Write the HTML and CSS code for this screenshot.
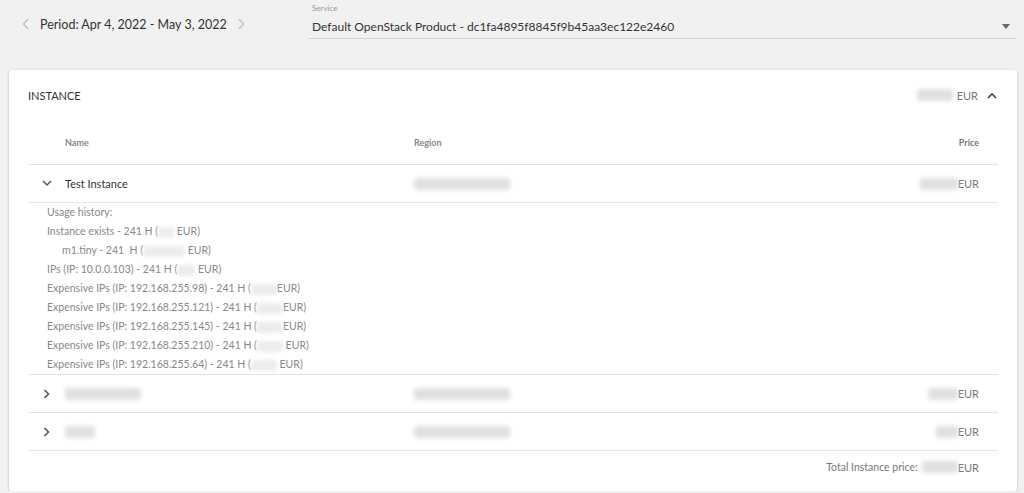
FILE: index.html
```html
<!DOCTYPE html>
<html lang="en">
<head>
    <meta charset="UTF-8">
    <title>Billing - Instance</title>
    <link rel="stylesheet" href="styles.css">
</head>
<body>
    <div class="toolbar">
        <div class="period">
            <svg class="nav-arrow" width="8" height="12" viewBox="0 0 8 12"><path d="M6 1 L1.5 6 L6 11" fill="none" stroke="#c4c4c4" stroke-width="1.4"/></svg>
            <span class="period-text">Period: Apr 4, 2022 - May 3, 2022</span>
            <svg class="nav-arrow" width="8" height="12" viewBox="0 0 8 12"><path d="M2 1 L6.5 6 L2 11" fill="none" stroke="#c4c4c4" stroke-width="1.4"/></svg>
        </div>
        <div class="service">
            <div class="service-label">Service</div>
            <div class="service-select">
                <span>Default OpenStack Product - dc1fa4895f8845f9b45aa3ec122e2460</span>
                <svg width="8" height="5" viewBox="0 0 8 5"><path d="M0 0 H8 L4 5 Z" fill="#666"/></svg>
            </div>
        </div>
    </div>

    <div class="card">
        <div class="card-header">
            <span class="card-title">INSTANCE</span>
            <div class="card-total">
                <span class="blur" style="width:36px"></span>
                <span class="eur">EUR</span>
                <svg width="10" height="7" viewBox="0 0 10 7"><path d="M1 6 L5 2 L9 6" fill="none" stroke="#444" stroke-width="1.6"/></svg>
            </div>
        </div>

        <div class="table">
            <div class="row head">
                <div class="col-toggle"></div>
                <div class="col-name">Name</div>
                <div class="col-region">Region</div>
                <div class="col-price">Price</div>
            </div>

            <div class="row">
                <div class="col-toggle">
                    <svg width="10" height="7" viewBox="0 0 10 7"><path d="M1 1 L5 5 L9 1" fill="none" stroke="#555" stroke-width="1.5"/></svg>
                </div>
                <div class="col-name name-text">Test Instance</div>
                <div class="col-region"><span class="blur" style="width:96px"></span></div>
                <div class="col-price"><span class="blur" style="width:38px"></span><span class="eur">EUR</span></div>
            </div>
            <div class="usage">
                <div>Usage history:</div>
                <div>Instance exists - 241 H (<span class="blur" style="width:16px"></span> EUR)</div>
                <div class="indent">m1.tiny - 241 &nbsp;H (<span class="blur" style="width:42px"></span> EUR)</div>
                <div>IPs (IP: 10.0.0.103) - 241 H (<span class="blur" style="width:18px"></span> EUR)</div>
                <div>Expensive IPs (IP: 192.168.255.98) - 241 H (<span class="blur" style="width:26px"></span>EUR)</div>
                <div>Expensive IPs (IP: 192.168.255.121) - 241 H (<span class="blur" style="width:26px"></span>EUR)</div>
                <div>Expensive IPs (IP: 192.168.255.145) - 241 H (<span class="blur" style="width:26px"></span>EUR)</div>
                <div>Expensive IPs (IP: 192.168.255.210) - 241 H (<span class="blur" style="width:26px"></span> EUR)</div>
                <div>Expensive IPs (IP: 192.168.255.64) - 241 H (<span class="blur" style="width:26px"></span> EUR)</div>
            </div>

            <div class="row">
                <div class="col-toggle">
                    <svg width="7" height="10" viewBox="0 0 7 10"><path d="M1.5 1 L5.5 5 L1.5 9" fill="none" stroke="#555" stroke-width="1.6"/></svg>
                </div>
                <div class="col-name"><span class="blur" style="width:76px"></span></div>
                <div class="col-region"><span class="blur" style="width:96px"></span></div>
                <div class="col-price"><span class="blur" style="width:30px"></span><span class="eur">EUR</span></div>
            </div>
            <div class="row">
                <div class="col-toggle">
                    <svg width="7" height="10" viewBox="0 0 7 10"><path d="M1.5 1 L5.5 5 L1.5 9" fill="none" stroke="#555" stroke-width="1.6"/></svg>
                </div>
                <div class="col-name"><span class="blur" style="width:30px"></span></div>
                <div class="col-region"><span class="blur" style="width:96px"></span></div>
                <div class="col-price"><span class="blur" style="width:22px"></span><span class="eur">EUR</span></div>
            </div>

            <div class="total">
                Total Instance price: <span class="blur" style="width:36px"></span><span class="eur">EUR</span>
            </div>
        </div>
    </div>
</body>
</html>
```
FILE: styles.css
```css
* {
    box-sizing: border-box;
}

body {
    margin: 0;
    background-color: #f1f1f1;
    font-family: Lato, 'Open Sans', sans-serif;
    color: #333;
}

.toolbar {
    display: flex;
    height: 70px;
    padding: 0 8px 0 22px;
}

.period {
    display: flex;
    align-items: center;
    gap: 10px;
    height: 48px;
    width: 286px;
}

.period-text {
    font-size: 12.5px;
    color: #333;
}

.service {
    flex: 1;
    padding-top: 3px;
}

.service-label {
    font-size: 8px;
    color: #999;
    padding-left: 4px;
    line-height: 11px;
}

.service-select {
    display: flex;
    justify-content: space-between;
    align-items: center;
    font-size: 12px;
    color: #333;
    height: 25px;
    padding: 0 6px 0 4px;
    border-bottom: 1px solid #d4d4d4;
}

.card {
    margin: 0 7px 0 9px;
    background: white;
    border-radius: 3px;
    box-shadow: 0 1px 3px rgba(0,0,0,0.25);
    padding: 0 19px 8px 19px;
}

.card-header {
    display: flex;
    justify-content: space-between;
    align-items: center;
    height: 50px;
}

.card-title {
    font-size: 11px;
    color: #333;
}

.card-total {
    display: flex;
    align-items: center;
    font-size: 11px;
}

.card-total .blur {
    margin-right: 4px;
}

.card-total svg {
    margin-left: 9px;
    margin-right: 1px;
}

.row {
    display: flex;
    align-items: center;
    height: 38px;
    border-bottom: 1px solid #e4e4e4;
    font-size: 11px;
}

.row.head {
    height: 45px;
    font-size: 9px;
    font-weight: bold;
    color: #888;
}

.col-toggle {
    width: 37px;
    display: flex;
    justify-content: center;
}

.col-name {
    width: 349px;
    display: flex;
    align-items: center;
}

.name-text {
    color: #333;
}

.col-region {
    flex: 1;
    display: flex;
    align-items: center;
}

.col-price {
    display: flex;
    align-items: center;
    justify-content: flex-end;
    padding-right: 19px;
    color: #777;
}

.eur {
    color: #777;
    font-size: 11px;
}

.blur {
    display: inline-block;
    height: 12px;
    background-color: #e0e0e0;
    border-radius: 3px;
    filter: blur(2px);
    vertical-align: middle;
}

.usage {
    font-size: 10.5px;
    color: #888;
    line-height: 19px;
    padding-top: 0;
    border-bottom: 1px solid #e4e4e4;
    padding-left: 19px;
}

.usage .blur {
    height: 11px;
    background-color: #ececec;
}

.indent {
    padding-left: 15px;
}

.total {
    display: flex;
    align-items: center;
    justify-content: flex-end;
    height: 32px;
    padding-right: 19px;
    font-size: 10.5px;
    color: #777;
}

.total .blur {
    margin-left: 4px;
}
```
